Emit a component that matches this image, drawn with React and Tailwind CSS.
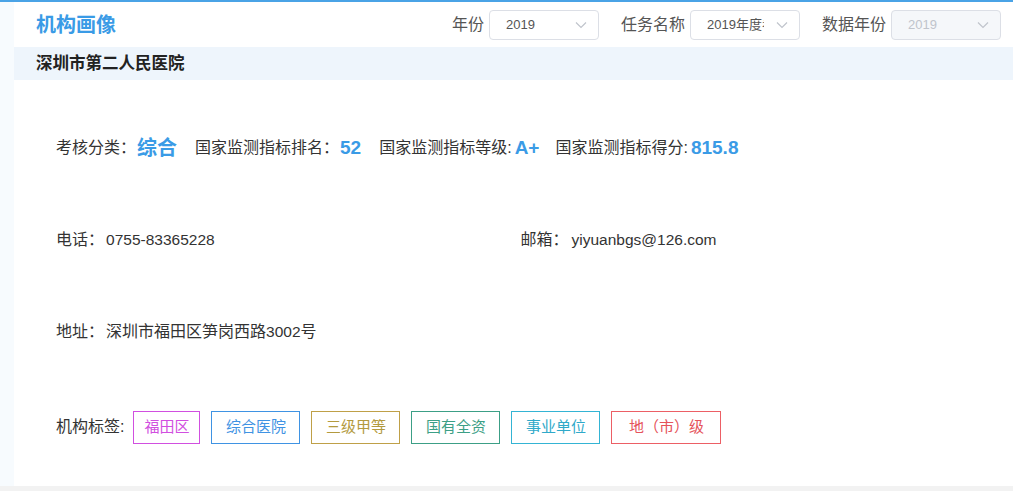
import React from "react";

const font = { fontFamily: '"Liberation Sans", "Noto Sans CJK SC", sans-serif' };

function Chevron({ color = "#c0c4cc" }) {
  return (
    <svg width="12" height="8" viewBox="0 0 12 8" fill="none">
      <path d="M1 1.5 L6 6.5 L11 1.5" stroke={color} strokeWidth="1.2" />
    </svg>
  );
}

function Select({ value, disabled }) {
  return (
    <div
      className={`flex h-[30px] w-[110px] items-center justify-between rounded-[4px] border border-[#dcdfe6] pl-[16px] pr-[11px] text-[13px] ${
        disabled ? "bg-[#f5f7fa] text-[#c0c4cc]" : "bg-white text-[#555]"
      }`}
    >
      <span className="w-[57px] overflow-hidden whitespace-nowrap">{value}</span>
      <Chevron />
    </div>
  );
}

const tags = [
  { t: "福田区", c: "border-[#d14fe0] text-[#d14fe0]", w: "w-[67px]" },
  { t: "综合医院", c: "border-[#3f93e3] text-[#3f93e3]", w: "w-[89px]" },
  { t: "三级甲等", c: "border-[#bfa048] text-[#b39a3e]", w: "w-[89px]" },
  { t: "国有全资", c: "border-[#3c9f86] text-[#3c9f86]", w: "w-[89px]" },
  { t: "事业单位", c: "border-[#34b4d4] text-[#2fa9c9]", w: "w-[89px]" },
  { t: "地（市）级", c: "border-[#ec5f65] text-[#e5535a]", w: "w-[110px]" },
];

export default function App() {
  return (
    <div className="flex h-[491px] w-[1013px] flex-col overflow-hidden bg-[#f2f2f2]" style={font}>
      <div className="flex flex-1 border-t-2 border-[#4aa3e6] bg-white">
        <div className="w-[14px] bg-[#f7fbfe]" />
        <div className="flex flex-1 flex-col bg-white">
          <div className="flex h-[45px] items-center justify-between pl-[22px] pr-[12px]">
            <div className="text-[20px] font-bold text-[#3a9be6]">机构画像</div>
            <div className="flex items-center text-[16px] text-[#555]">
              <span className="mr-[5px]">年份</span>
              <Select value="2019" />
              <span className="ml-[22px] mr-[5px]">任务名称</span>
              <Select value="2019年度考核" />
              <span className="ml-[22px] mr-[5px]">数据年份</span>
              <Select value="2019" disabled />
            </div>
          </div>
          <div className="flex h-[33px] items-center bg-[#eef5fc] pl-[22px] text-[16.5px] font-bold text-[#222]">
            深圳市第二人民医院
          </div>
          <div className="flex flex-col pl-[42px] pt-[22px] text-[16px] text-[#333]">
            <div className="flex h-[92px] items-center">
              <span>考核分类：</span>
              <span className="ml-[1px] text-[20px] font-bold text-[#3a9be6]">综合</span>
              <span className="ml-[18px]">国家监测指标排名：</span>
              <span className="ml-[1px] text-[19px] font-bold text-[#3a9be6]">52</span>
              <span className="ml-[18px]">国家监测指标等级:</span>
              <span className="ml-[3px] text-[19px] font-bold text-[#3a9be6]">A+</span>
              <span className="ml-[16px]">国家监测指标得分:</span>
              <span className="ml-[3px] text-[19px] font-bold text-[#3a9be6]">815.8</span>
            </div>
            <div className="grid h-[92px] grid-cols-2 items-center pr-[28px]">
              <div>
                <span>电话：</span>
                <span className="ml-[2px] text-[15.5px]">0755-83365228</span>
              </div>
              <div>
                <span>邮箱：</span>
                <span className="ml-[3px] text-[15.5px]">yiyuanbgs@126.com</span>
              </div>
            </div>
            <div className="flex h-[92px] items-center">
              <span>地址：</span>
              <span className="ml-[2px]">
                深圳市福田区笋岗西路<span className="text-[15.5px]">3002</span>号
              </span>
            </div>
            <div className="flex h-[98px] items-center">
              <span>机构标签:</span>
              <div className="ml-[9px] flex gap-[11px] text-[15px]">
                {tags.map((g) => (
                  <div
                    key={g.t}
                    className={`flex h-[33px] items-center justify-center border ${g.c} ${g.w}`}
                  >
                    {g.t}
                  </div>
                ))}
              </div>
            </div>
          </div>
        </div>
      </div>
      <div className="h-[5px] bg-[#f2f2f2]" />
    </div>
  );
}
